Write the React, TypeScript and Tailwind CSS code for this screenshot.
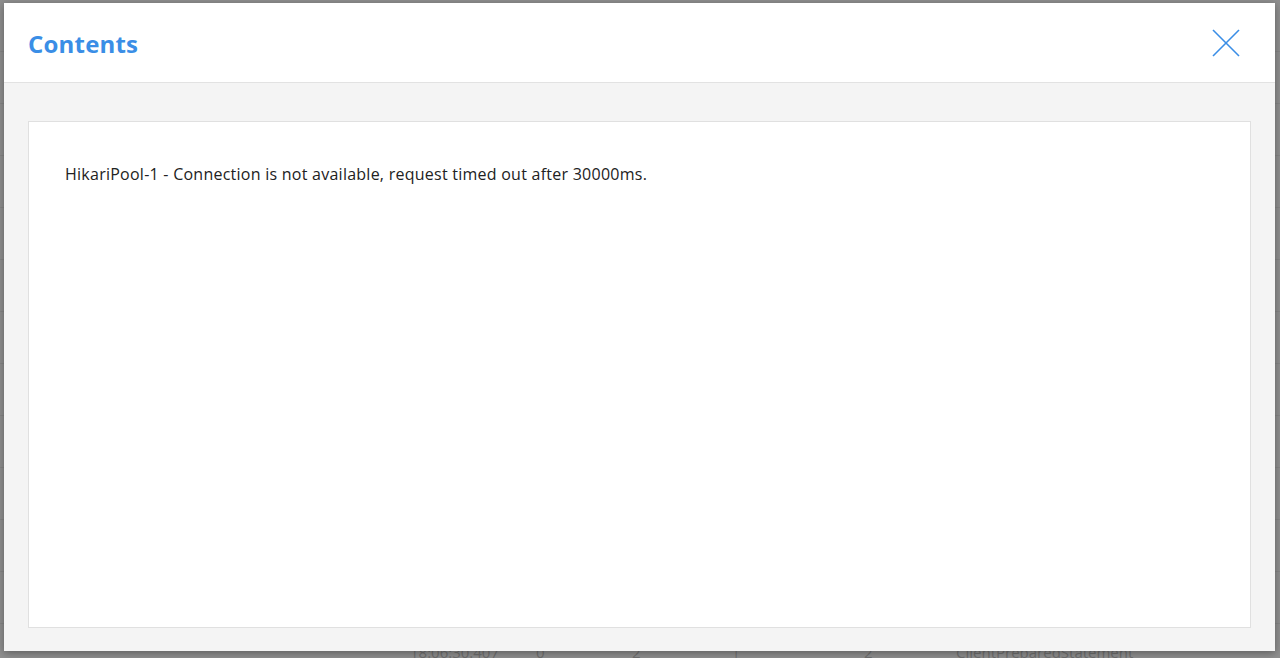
const rows = [
  { time: '18:06:30.407', a: '0', b: '2', c: '2', cls: 'ClientPreparedStatement' },
];

function Backdrop() {
  return (
    <div className="absolute inset-0 bg-[#8f8f8f] text-[#6f6f6f] font-['Open_Sans',sans-serif] text-[15px]">
      <div className="flex flex-col">
        {Array.from({ length: 12 }).map((_, i) => (
          <div key={i} className="h-[52px] border-b border-[#868686]" />
        ))}
      </div>
      <div className="absolute left-0 right-0 top-[641px] flex items-center">
        {rows.map((r) => (
          <div key={r.time} className="flex items-center">
            <span className="ml-[410px] w-[126px]">{r.time}</span>
            <span className="w-[96px]">{r.a}</span>
            <span className="w-[98px]">{r.b}</span>
            <span className="w-[134px] pl-[2px]">|</span>
            <span className="w-[92px]">{r.c}</span>
            <span>{r.cls}</span>
          </div>
        ))}
      </div>
    </div>
  );
}

function CloseIcon() {
  return (
    <svg width="28" height="28" viewBox="0 0 28 28" fill="none" stroke="#3a8ee6" strokeWidth="1.6">
      <line x1="1" y1="1" x2="27" y2="27" />
      <line x1="27" y1="1" x2="1" y2="27" />
    </svg>
  );
}

export default function App() {
  return (
    <div className="relative h-[658px] w-[1280px] overflow-hidden font-['Open_Sans',sans-serif]">
      <Backdrop />
      <div className="absolute left-[4px] top-[3px] flex h-[648px] w-[1271px] flex-col bg-[#f4f4f4] shadow-[0_2px_8px_rgba(0,0,0,0.35)]">
        <header className="flex h-[80px] shrink-0 items-center justify-between border-b border-[#e2e2e2] bg-white pl-[24px] pr-[35px]">
          <h2 className="mt-[2px] text-[24px] font-bold tracking-[0.2px] text-[#3a8ee6]">Contents</h2>
          <CloseIcon />
        </header>
        <div className="flex flex-1 flex-col px-[24px] pb-[23px] pt-[38px]">
          <div className="flex-1 border border-[#e0e0e0] bg-white px-[36px] pt-[41px]">
            <p className="text-[16px] leading-[22px] tracking-[0.25px] text-[#222]">
              HikariPool-1 - Connection is not available, request timed out after 30000ms.
            </p>
          </div>
        </div>
      </div>
    </div>
  );
}
